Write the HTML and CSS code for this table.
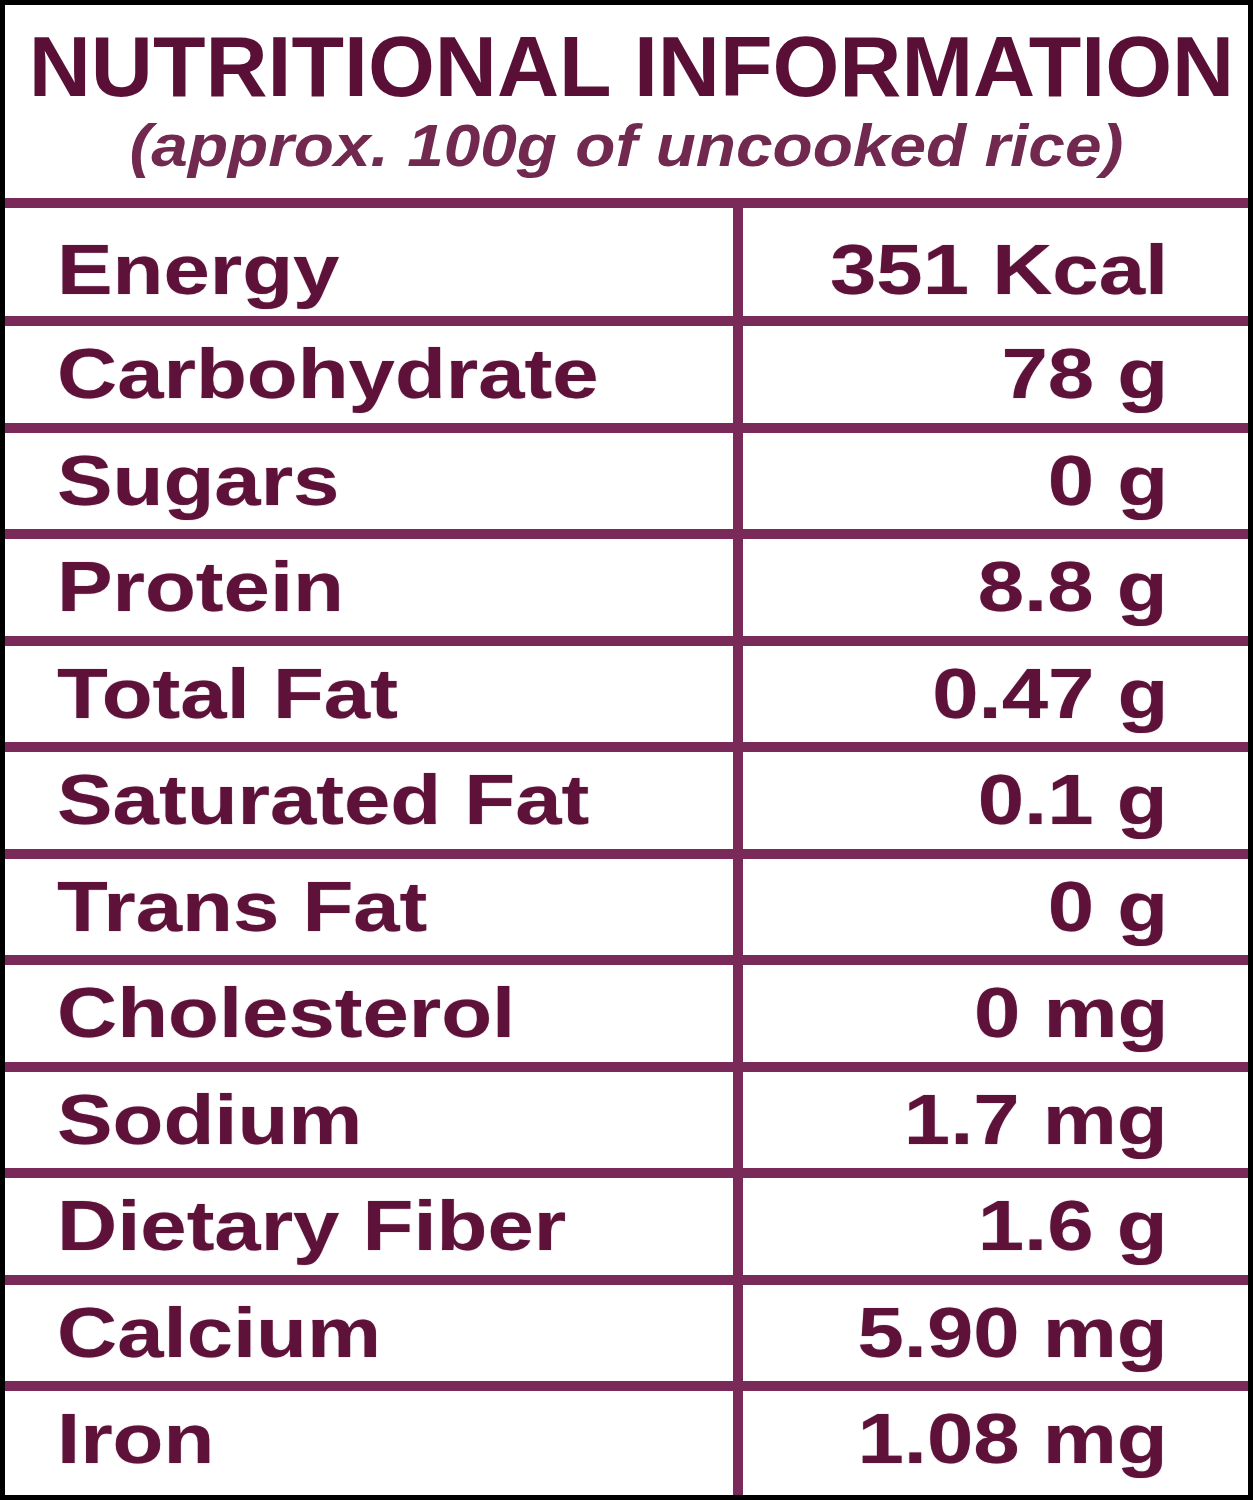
FILE: index.html
```html
<!DOCTYPE html>
<html>
<head>
<meta charset="utf-8">
<link rel="stylesheet" href="styles.css">
</head>
<body>
<div class="label">
  <header class="head">
    <h1 class="title">NUTRITIONAL INFORMATION</h1>
    <p class="sub"><span>(approx. 100g of uncooked rice)</span></p>
  </header>
  <div class="table">
    <div class="row first"><div class="name"><span>Energy</span></div><div class="val"><span>351 Kcal</span></div></div>
    <div class="row"><div class="name"><span>Carbohydrate</span></div><div class="val"><span>78 g</span></div></div>
    <div class="row"><div class="name"><span>Sugars</span></div><div class="val"><span>0 g</span></div></div>
    <div class="row"><div class="name"><span>Protein</span></div><div class="val"><span>8.8 g</span></div></div>
    <div class="row"><div class="name"><span>Total Fat</span></div><div class="val"><span>0.47 g</span></div></div>
    <div class="row"><div class="name"><span>Saturated Fat</span></div><div class="val"><span>0.1 g</span></div></div>
    <div class="row"><div class="name"><span>Trans Fat</span></div><div class="val"><span>0 g</span></div></div>
    <div class="row"><div class="name"><span>Cholesterol</span></div><div class="val"><span>0 mg</span></div></div>
    <div class="row"><div class="name"><span>Sodium</span></div><div class="val"><span>1.7 mg</span></div></div>
    <div class="row"><div class="name"><span>Dietary Fiber</span></div><div class="val"><span>1.6 g</span></div></div>
    <div class="row"><div class="name"><span>Calcium</span></div><div class="val"><span>5.90 mg</span></div></div>
    <div class="row last"><div class="name"><span>Iron</span></div><div class="val"><span>1.08 mg</span></div></div>
  </div>
</div>
</body>
</html>
```
FILE: styles.css
```css
html, body {
  margin: 0;
  padding: 0;
  background: #ffffff;
}
.label {
  width: 1253px;
  height: 1500px;
  box-sizing: border-box;
  border: 5px solid #000;
  background: #fff;
  display: flex;
  flex-direction: column;
  font-family: "Liberation Sans", Arial, sans-serif;
  font-weight: bold;
  color: #5e1239;
  overflow: hidden;
}
.head {
  height: 193px;
  flex: none;
  box-sizing: border-box;
  padding-top: 19px;
  text-align: center;
}
.title {
  margin: 0;
  padding-left: 10px;
  font-size: 86px;
  line-height: 85px;
  font-weight: bold;
  color: #5a0f36;
  white-space: nowrap;
}
.sub {
  margin: 7px 0 0 0;
  font-size: 60px;
  line-height: 60px;
  font-style: italic;
  color: #72294f;
  white-space: nowrap;
}
.sub span {
  display: inline-block;
  transform: scaleX(1.096);
  transform-origin: center center;
}
.table {
  flex: 1;
  display: flex;
  flex-direction: column;
}
.row {
  display: flex;
  flex: none;
  border-top: 10px solid #7a2a59;
  height: 96.5px;
  font-size: 70px;
  line-height: 96.5px;
  white-space: nowrap;
  text-shadow: 0 0 1px rgba(94, 18, 57, 0.6);
}
.row.first {
  height: 108px;
}
.row.first .name,
.row.first .val {
  padding-top: 16px;
  line-height: 92px;
}
.row.last {
  flex: 1;
  height: auto;
}
.name {
  width: 728px;
  padding-left: 52px;
  box-sizing: border-box;
}
.name span {
  display: inline-block;
  transform: scaleX(1.19);
  transform-origin: left center;
}
.val {
  flex: 1;
  border-left: 10px solid #7a2a59;
  padding-right: 80px;
  text-align: right;
}
.val span {
  display: inline-block;
  transform: scaleX(1.19);
  transform-origin: right center;
}
```
